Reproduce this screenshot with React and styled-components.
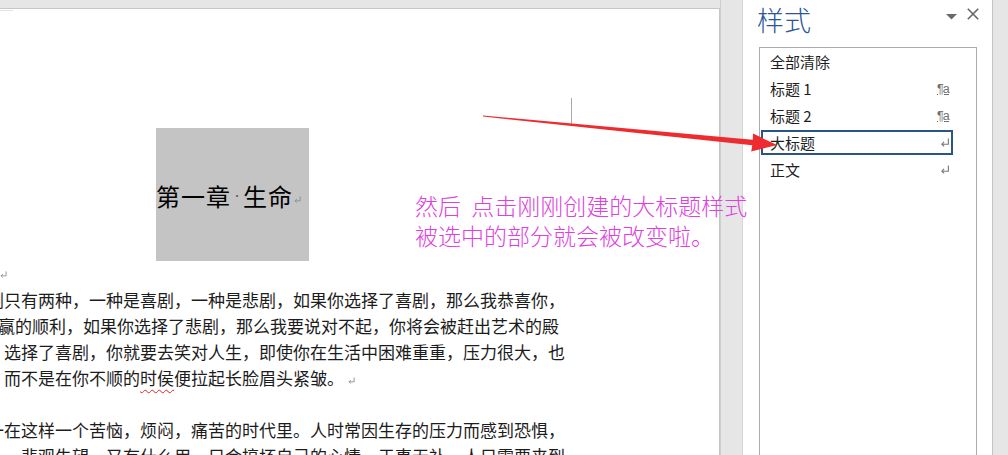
import React from "react";
import styled, { createGlobalStyle } from "styled-components";

const GlobalStyle = createGlobalStyle`
  html, body { margin: 0; padding: 0; background: #e6e6e6; }
  body { font-family: "Noto Sans CJK SC", sans-serif; }
  #root { width: 1008px; height: 455px; overflow: hidden; }
`;

const CJK = `"Noto Sans CJK SC", "Noto Sans", sans-serif`;

const Screen = styled.div`
  position: relative;
  display: flex;
  width: 1008px;
  height: 455px;
  background: #e6e6e6;
  overflow: hidden;
`;

/* ---------- document side ---------- */
const DocArea = styled.div`
  flex: 0 0 720px;
  display: flex;
  flex-direction: column;
  padding-top: 8px;
  box-sizing: border-box;
`;

const Page = styled.div`
  position: relative;
  flex: 1;
  background: #fff;
  border-top: 1px solid #c6c6c6;
  border-right: 1px solid #c6c6c6;
  overflow: hidden;
  padding-top: 119px;
  font-family: ${CJK};
  color: #1c1c1c;
`;

const CornerMarkV = styled.div`
  position: absolute;
  left: 571px;
  top: 89px;
  width: 1px;
  height: 28px;
  background: #a8a8a8;
`;

const CornerMarkH = styled.div`
  position: absolute;
  left: 0;
  top: 1px;
  width: 13px;
  height: 1px;
  background: #e2e2e2;
`;

const HeadingBox = styled.div`
  margin-left: 156px;
  width: 153px;
  height: 133px;
  box-sizing: border-box;
  padding: 2px 0 0 0;
  background: #c4c4c4;
  display: flex;
  align-items: center;
  font-size: 24px;
  letter-spacing: 1px;
  color: #000;
  white-space: nowrap;
`;

const SpaceDot = styled.span`
  display: inline-block;
  width: 12px;
  text-align: center;
  font-size: 9px;
  color: #555;
  letter-spacing: 0;
`;

const MarkLine = styled.div`
  height: 26px;
  display: flex;
  align-items: center;
`;

const Body = styled.div`
  margin-left: -13px;
  font-size: 17px;
`;

const TextLine = styled.div`
  height: 26px;
  line-height: 26px;
  white-space: nowrap;
  margin-left: ${(p) => p.$shift || 0}px;
  display: flex;
  align-items: center;
`;

const Misspelt = styled.span`
  text-decoration: underline wavy #e02424;
  text-decoration-thickness: 1px;
  text-underline-offset: 4px;
`;

const ReturnSvg = styled.svg`
  flex: none;
  margin-left: ${(p) => p.$gap || 0}px;
  margin-top: ${(p) => p.$drop || 0}px;
`;

function ReturnMark({ w = 7, h = 7, gap = 0, drop = 0, color = "#8c8c8c" }) {
  return (
    <ReturnSvg width={w} height={h} viewBox="0 0 8 8" $gap={gap} $drop={drop}>
      <path
        d="M7 0.5 V5.5 H1.2 M3.2 3.5 L1.2 5.5 L3.2 7.5"
        fill="none"
        stroke={color}
        strokeWidth="1"
      />
    </ReturnSvg>
  );
}

/* ---------- gutters ---------- */
const Gutter = styled.div`
  flex: 0 0 23px;
  background: #e6e6e6;
  border-left: 1px solid #cfcfcf;
  border-right: 1px solid #d6d6d6;
  box-sizing: border-box;
`;

const RightStrip = styled.div`
  flex: 0 0 16px;
  background: #e6e6e6;
  border-left: 1px solid #c4c4c4;
  box-sizing: border-box;
`;

/* ---------- styles pane ---------- */
const Pane = styled.aside`
  flex: 0 0 249px;
  background: #fff;
  display: flex;
  flex-direction: column;
  padding: 0 15px 0 16px;
  box-sizing: border-box;
  font-family: ${CJK};
`;

const PaneHeader = styled.div`
  height: 47px;
  display: flex;
  align-items: flex-start;
  padding-top: 2px;
  box-sizing: border-box;
`;

const PaneTitle = styled.h2`
  flex: 1;
  margin: 0 0 0 -2px;
  font-size: 27px;
  line-height: 36px;
  font-weight: 300;
  color: #2b579a;
`;

const HeaderTools = styled.div`
  display: flex;
  align-items: flex-start;
  gap: 10px;
  margin-right: -2px;
  padding-top: 6px;
`;

const StyleList = styled.div`
  flex: 1;
  border: 1px solid #ababab;
  border-bottom: none;
  display: flex;
  flex-direction: column;
`;

const StyleRow = styled.div`
  height: 25px;
  margin: 1px 23px 1px 1px;
  box-sizing: border-box;
  border: 2px solid ${(p) => (p.$selected ? "#2c5587" : "transparent")};
  padding: 0 1px 0 7px;
  display: flex;
  align-items: center;
  justify-content: space-between;
  font-size: 15px;
  color: #1e1e1e;
  white-space: nowrap;
`;

const ParaCharIcon = styled.span`
  font-family: "Liberation Sans", sans-serif;
  font-size: 12.5px;
  letter-spacing: -0.8px;
  color: #707070;
  text-decoration: underline;
  text-underline-offset: 1px;
  padding-right: 1px;
`;

/* ---------- overlays ---------- */
const Callout = styled.div`
  position: absolute;
  left: 415px;
  top: 190px;
  font-family: ${CJK};
  font-size: 23px;
  line-height: 30px;
  font-weight: 300;
  color: #e040e0;
  white-space: pre;
  pointer-events: none;
`;

const ArrowSvg = styled.svg`
  position: absolute;
  left: 0;
  top: 0;
  pointer-events: none;
`;

const styles = [
  { name: "全部清除", icon: null },
  { name: "标题 1", icon: "para" },
  { name: "标题 2", icon: "para" },
  { name: "大标题", icon: "ret", selected: true },
  { name: "正文", icon: "ret" },
];

export default function App() {
  return (
    <>
      <GlobalStyle />
      <Screen>
        <DocArea>
          <Page>
            <CornerMarkH />
            <CornerMarkV />
            <HeadingBox>
              第一章<SpaceDot>·</SpaceDot>生命
              <ReturnMark w={7} h={7} gap={1} drop={8} />
            </HeadingBox>
            <MarkLine>
              <ReturnMark w={7} h={7} />
            </MarkLine>
            <Body>
              <TextLine>剧只有两种，一种是喜剧，一种是悲剧，如果你选择了喜剧，那么我恭喜你，</TextLine>
              <TextLine $shift={11}>赢的顺利，如果你选择了悲剧，那么我要说对不起，你将会被赶出艺术的殿</TextLine>
              <TextLine $shift={17}>选择了喜剧，你就要去笑对人生，即使你在生活中困难重重，压力很大，也</TextLine>
              <TextLine $shift={17}>
                而不是在你不顺的<Misspelt>时侯</Misspelt>便拉起长脸眉头紧皱。
                <ReturnMark w={7} h={7} gap={4} drop={4} />
              </TextLine>
              <TextLine />
              <TextLine>一在这样一个苦恼，烦闷，痛苦的时代里。人时常因生存的压力而感到恐惧，</TextLine>
              <TextLine $shift={17}>，悲观失望，又有什么用，只会搞坏自己的心情，于事无补，人只需要来到</TextLine>
            </Body>
          </Page>
        </DocArea>
        <Gutter />
        <Pane>
          <PaneHeader>
            <PaneTitle>样式</PaneTitle>
            <HeaderTools>
              <svg width="11" height="12" viewBox="0 0 11 12">
                <path d="M0 6 H11 L5.5 11.5 Z" fill="#6a6a6a" />
              </svg>
              <svg width="12" height="12" viewBox="0 0 12 12">
                <path d="M0.8 0.8 L11.2 11.2 M11.2 0.8 L0.8 11.2" stroke="#666" strokeWidth="1.6" />
              </svg>
            </HeaderTools>
          </PaneHeader>
          <StyleList>
            {styles.map((s) => (
              <StyleRow key={s.name} $selected={s.selected}>
                <span>{s.name}</span>
                {s.icon === "para" && <ParaCharIcon>¶a</ParaCharIcon>}
                {s.icon === "ret" && <ReturnMark w={10} h={9} color="#7a7a7a" />}
              </StyleRow>
            ))}
          </StyleList>
        </Pane>
        <RightStrip />
        <ArrowSvg width="1008" height="455" viewBox="0 0 1008 455">
          <polygon
            points="483,115.6 752.8,139.8 753,133.6 777,145 751.2,151.5 752.3,145.2 483,116.6"
            fill="#ee2b2e"
          />
        </ArrowSvg>
        <Callout>{"然后  点击刚刚创建的大标题样式\n被选中的部分就会被改变啦。"}</Callout>
      </Screen>
    </>
  );
}
